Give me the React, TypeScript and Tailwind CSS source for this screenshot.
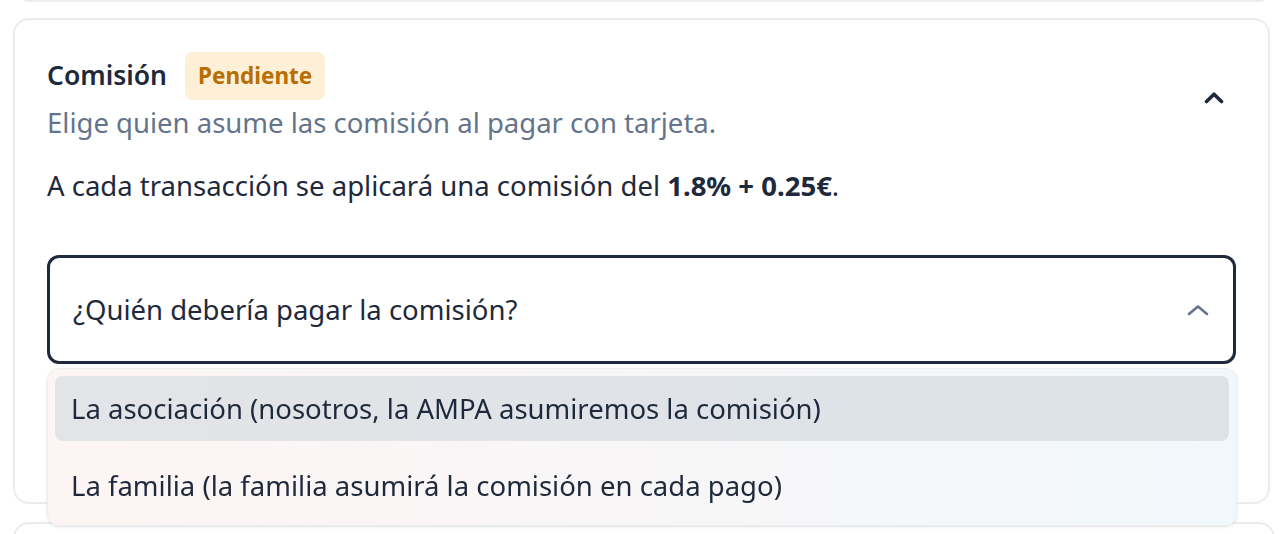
const font = { fontFamily: '"Noto Sans", "Liberation Sans", sans-serif' };

function ChevronUpBold({ className }: { className?: string }) {
    return (
        <svg viewBox="0 0 20 13" className={className} fill="none" stroke="currentColor" strokeWidth={3.6} strokeLinecap="round" strokeLinejoin="round">
            <path d="M2.5 10.5 10 3.2l7.5 7.3" />
        </svg>
    );
}

function ChevronUpThin({ className }: { className?: string }) {
    return (
        <svg viewBox="0 0 22 12" className={className} fill="none" stroke="currentColor" strokeWidth={2.6} strokeLinecap="round" strokeLinejoin="round">
            <path d="M2 10 11 2.5 20 10" />
        </svg>
    );
}

function Dropdown() {
    return (
        <div className="absolute left-0 right-[-1px] top-full z-10 mt-[4px] rounded-xl border border-[#eceff1] bg-gradient-to-r from-[#fdf5f4] via-[#f8f6f7] to-[#f1f8fb] p-[7px] shadow-sm backdrop-blur">
            <div className="flex flex-col gap-3">
                <div className="flex h-[65px] items-center rounded-lg bg-gradient-to-r from-[#e3e4e7] to-[#dce3e8] px-4 text-[27.5px] text-[#1e293b]">
                    La asociación (nosotros, la AMPA asumiremos la comisión)
                </div>
                <div className="flex h-[65px] items-center rounded-lg px-4 text-[27.5px] text-[#1e293b]">
                    La familia (la familia asumirá la comisión en cada pago)
                </div>
            </div>
        </div>
    );
}

export default function App() {
    return (
        <div className="h-[534px] w-[1288px] overflow-hidden bg-white" style={font}>
            <div className="mx-[20px] -mt-[14px] h-[16px] rounded-2xl border-2 border-[#ededed]" />

            <div className="mx-[13px] mt-[16px] w-[1257px] rounded-2xl border-2 border-[#ececec] p-8">
                <div className="flex items-center justify-between">
                    <div>
                        <div className="flex h-[48px] items-center gap-[18px]">
                            <h2 className="text-[26.5px] font-semibold text-[#1e293b]">Comisión</h2>
                            <span className="flex h-[48px] items-center rounded-lg bg-[#fdf0d6] px-[13px] text-[22.5px] font-bold text-[#b86e00]">
                                Pendiente
                            </span>
                        </div>
                        <p className="mt-[3px] text-[27.5px] leading-[40px] text-[#64748b]">
                            Elige quien asume las comisión al pagar con tarjeta.
                        </p>
                    </div>
                    <button className="mr-[12px] text-[#1e293b]">
                        <ChevronUpBold className="h-[13px] w-[20px]" />
                    </button>
                </div>

                <p className="mt-[23px] text-[27.5px] leading-[40px] text-[#1e293b]">
                    A cada transacción se aplicará una comisión del <strong className="font-bold">1.8% + 0.25€</strong>.
                </p>

                <div className="relative mt-[49px]">
                    <button className="flex h-[109px] w-full items-center justify-between rounded-xl border-[3px] border-[#1e293b] bg-white pl-[23px] pr-[24px] text-left text-[27.5px] text-[#1e293b]">
                        ¿Quién debería pagar la comisión?
                        <ChevronUpThin className="h-[12px] w-[22px] text-[#64748b]" />
                    </button>
                    <Dropdown />
                </div>

                <div className="h-[106px]" />
            </div>

            <div className="mx-[13px] mt-[18px] h-[40px] rounded-2xl border-2 border-[#ececec]" />
        </div>
    );
}
